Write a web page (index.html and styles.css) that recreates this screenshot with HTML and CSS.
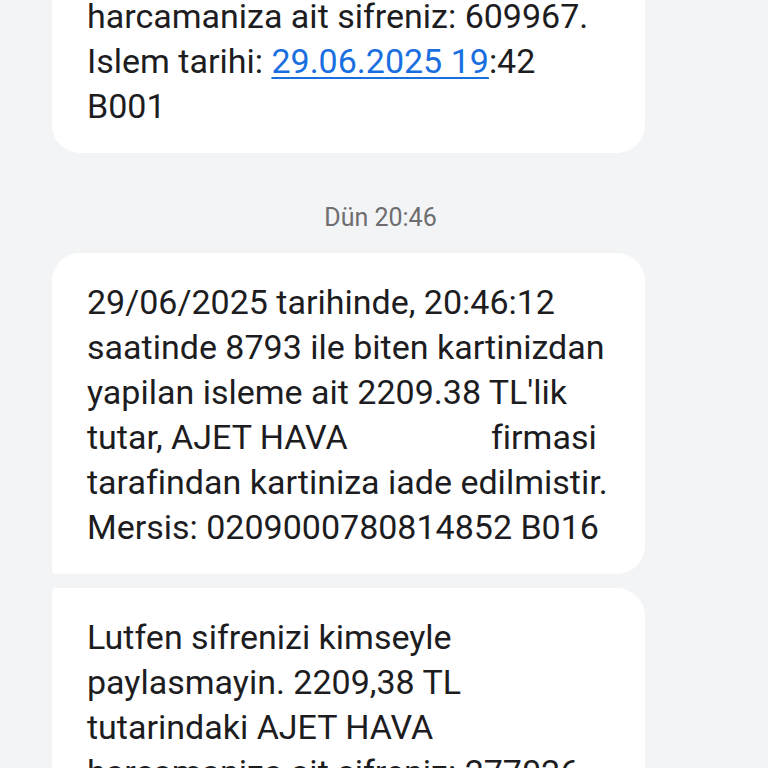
FILE: index.html
```html
<!DOCTYPE html>
<html lang="tr">
<head>
<meta charset="utf-8">
<link rel="stylesheet" href="styles.css">
</head>
<body>
<div class="thread">
  <div class="bubble single">
<p class="msg">Lutfen sifrenizi kimseyle
paylasmayin. 2209,38 TL
tutarindaki AJET HAVA
harcamaniza ait sifreniz: 609967.
Islem tarihi: <a class="link" href="#">29.06.2025 19</a>:42
B001</p>
  </div>
  <div class="stamp">Dün 20:46</div>
  <div class="bubble first">
<p class="msg">29/06/2025 tarihinde, 20:46:12
saatinde 8793 ile biten kartinizdan
yapilan isleme ait 2209.38 TL'lik
tutar, AJET HAVA                 firmasi
tarafindan kartiniza iade edilmistir.
Mersis: 0209000780814852 B016</p>
  </div>
  <div class="bubble last">
<p class="msg">Lutfen sifrenizi kimseyle
paylasmayin. 2209,38 TL
tutarindaki AJET HAVA
harcamaniza ait sifreniz: 277026.
Islem tarihi: 29.06.2025 20:46
B001</p>
  </div>
</div>
</body>
</html>
```
FILE: styles.css
```css
html, body {
  margin: 0;
  padding: 0;
  background: #f3f4f6;
  height: 768px;
  overflow: hidden;
}
body {
  font-family: Roboto, "Noto Sans", sans-serif;
  color: #1d1d1f;
}
.thread {
  display: flex;
  flex-direction: column;
  margin-top: -168px;
  padding-left: 52px;
  width: 593px;
}
.bubble {
  background: #ffffff;
  border-radius: 28px;
  padding: 27px 35px 24px 35px;
}
.bubble.first {
  border-bottom-left-radius: 4px;
  margin-bottom: 14px;
}
.bubble.last {
  border-top-left-radius: 4px;
}
.msg {
  margin: 0;
  font-size: 34px;
  line-height: 45px;
  white-space: pre;
}
.link {
  color: #1a6fe0;
  text-decoration: underline;
  text-underline-offset: 4px;
  text-decoration-thickness: 2px;
}
.stamp {
  font-size: 25px;
  line-height: 28px;
  color: #6e6e70;
  text-align: center;
  margin: 51px 0 21px 0;
  padding-left: 64px;
}
```
